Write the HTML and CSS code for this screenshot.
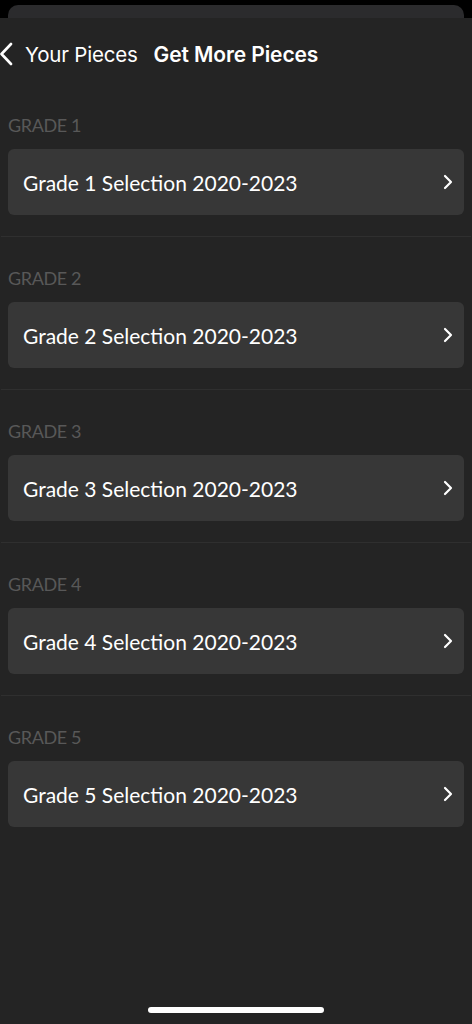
FILE: index.html
```html
<!DOCTYPE html>
<html>
<head>
<meta charset="utf-8">
<link rel="stylesheet" href="styles.css">
</head>
<body>
<div class="behind"></div>
<div class="sheet">
  <div class="nav">
    <svg class="back" width="14" height="24" viewBox="0 0 14 24"><path d="M11 2 L1.5 12 L11 22" fill="none" stroke="#fff" stroke-width="2.6" stroke-linecap="round" stroke-linejoin="round"/></svg>
    <span class="nav-back">Your Pieces</span>
    <span class="nav-title">Get More Pieces</span>
  </div>
  <div class="section">
    <div class="label">GRADE 1</div>
    <div class="card"><span>Grade 1 Selection 2020-2023</span><svg class="chev" width="12" height="16" viewBox="0 0 12 16"><path d="M3 2 L9 8 L3 14" fill="none" stroke="#fff" stroke-width="2.2" stroke-linecap="round" stroke-linejoin="round"/></svg></div>
  </div>
  <div class="section">
    <div class="label">GRADE 2</div>
    <div class="card"><span>Grade 2 Selection 2020-2023</span><svg class="chev" width="12" height="16" viewBox="0 0 12 16"><path d="M3 2 L9 8 L3 14" fill="none" stroke="#fff" stroke-width="2.2" stroke-linecap="round" stroke-linejoin="round"/></svg></div>
  </div>
  <div class="section">
    <div class="label">GRADE 3</div>
    <div class="card"><span>Grade 3 Selection 2020-2023</span><svg class="chev" width="12" height="16" viewBox="0 0 12 16"><path d="M3 2 L9 8 L3 14" fill="none" stroke="#fff" stroke-width="2.2" stroke-linecap="round" stroke-linejoin="round"/></svg></div>
  </div>
  <div class="section">
    <div class="label">GRADE 4</div>
    <div class="card"><span>Grade 4 Selection 2020-2023</span><svg class="chev" width="12" height="16" viewBox="0 0 12 16"><path d="M3 2 L9 8 L3 14" fill="none" stroke="#fff" stroke-width="2.2" stroke-linecap="round" stroke-linejoin="round"/></svg></div>
  </div>
  <div class="section last">
    <div class="label">GRADE 5</div>
    <div class="card"><span>Grade 5 Selection 2020-2023</span><svg class="chev" width="12" height="16" viewBox="0 0 12 16"><path d="M3 2 L9 8 L3 14" fill="none" stroke="#fff" stroke-width="2.2" stroke-linecap="round" stroke-linejoin="round"/></svg></div>
  </div>
  <div class="home"></div>
</div>
</body>
</html>
```

FILE: styles.css
```css
html, body {
  margin: 0;
  padding: 0;
  background: #000;
}
body {
  width: 472px;
  height: 1024px;
  overflow: hidden;
  font-family: Lato, "Open Sans", sans-serif;
}
.behind {
  margin: 5px 8px 0;
  height: 13px;
  background: #2b2b2d;
  border-radius: 10px 10px 0 0;
}
.sheet {
  position: relative;
  height: 1006px;
  background: #242424;
}
.nav {
  height: 60px;
  padding-top: 6px;
  display: flex;
  align-items: center;
  font-family: Inter, Roboto, sans-serif;
  font-size: 20.5px;
  color: #fff;
}
.back {
  margin-left: 0;
  margin-right: 11px;
}
.nav-back {
  font-weight: 400;
  letter-spacing: -0.2px;
}
.nav-title {
  margin-left: 16px;
  font-size: 21px;
  font-weight: 600;
  letter-spacing: -0.1px;
}
.section {
  padding: 29px 0 21px;
  border-bottom: 1px solid #2f2f2f;
  margin: 0 1px;
}
.section.last {
  border-bottom: none;
}
.label {
  margin: 0 7px;
  height: 20px;
  padding-top: 2px;
  line-height: 20px;
  font-size: 18px;
  letter-spacing: -0.4px;
  color: #585858;
}
.card {
  margin: 14px 7px 0;
  height: 66px;
  border-radius: 6px;
  background: #373737;
  display: flex;
  align-items: center;
  justify-content: space-between;
  padding: 0 10px 0 15px;
  color: #fff;
  font-size: 21px;
}
.chev {
  display: block;
}
.home {
  position: absolute;
  left: 148px;
  top: 989px;
  width: 176px;
  height: 6px;
  border-radius: 3px;
  background: #fff;
}
```
